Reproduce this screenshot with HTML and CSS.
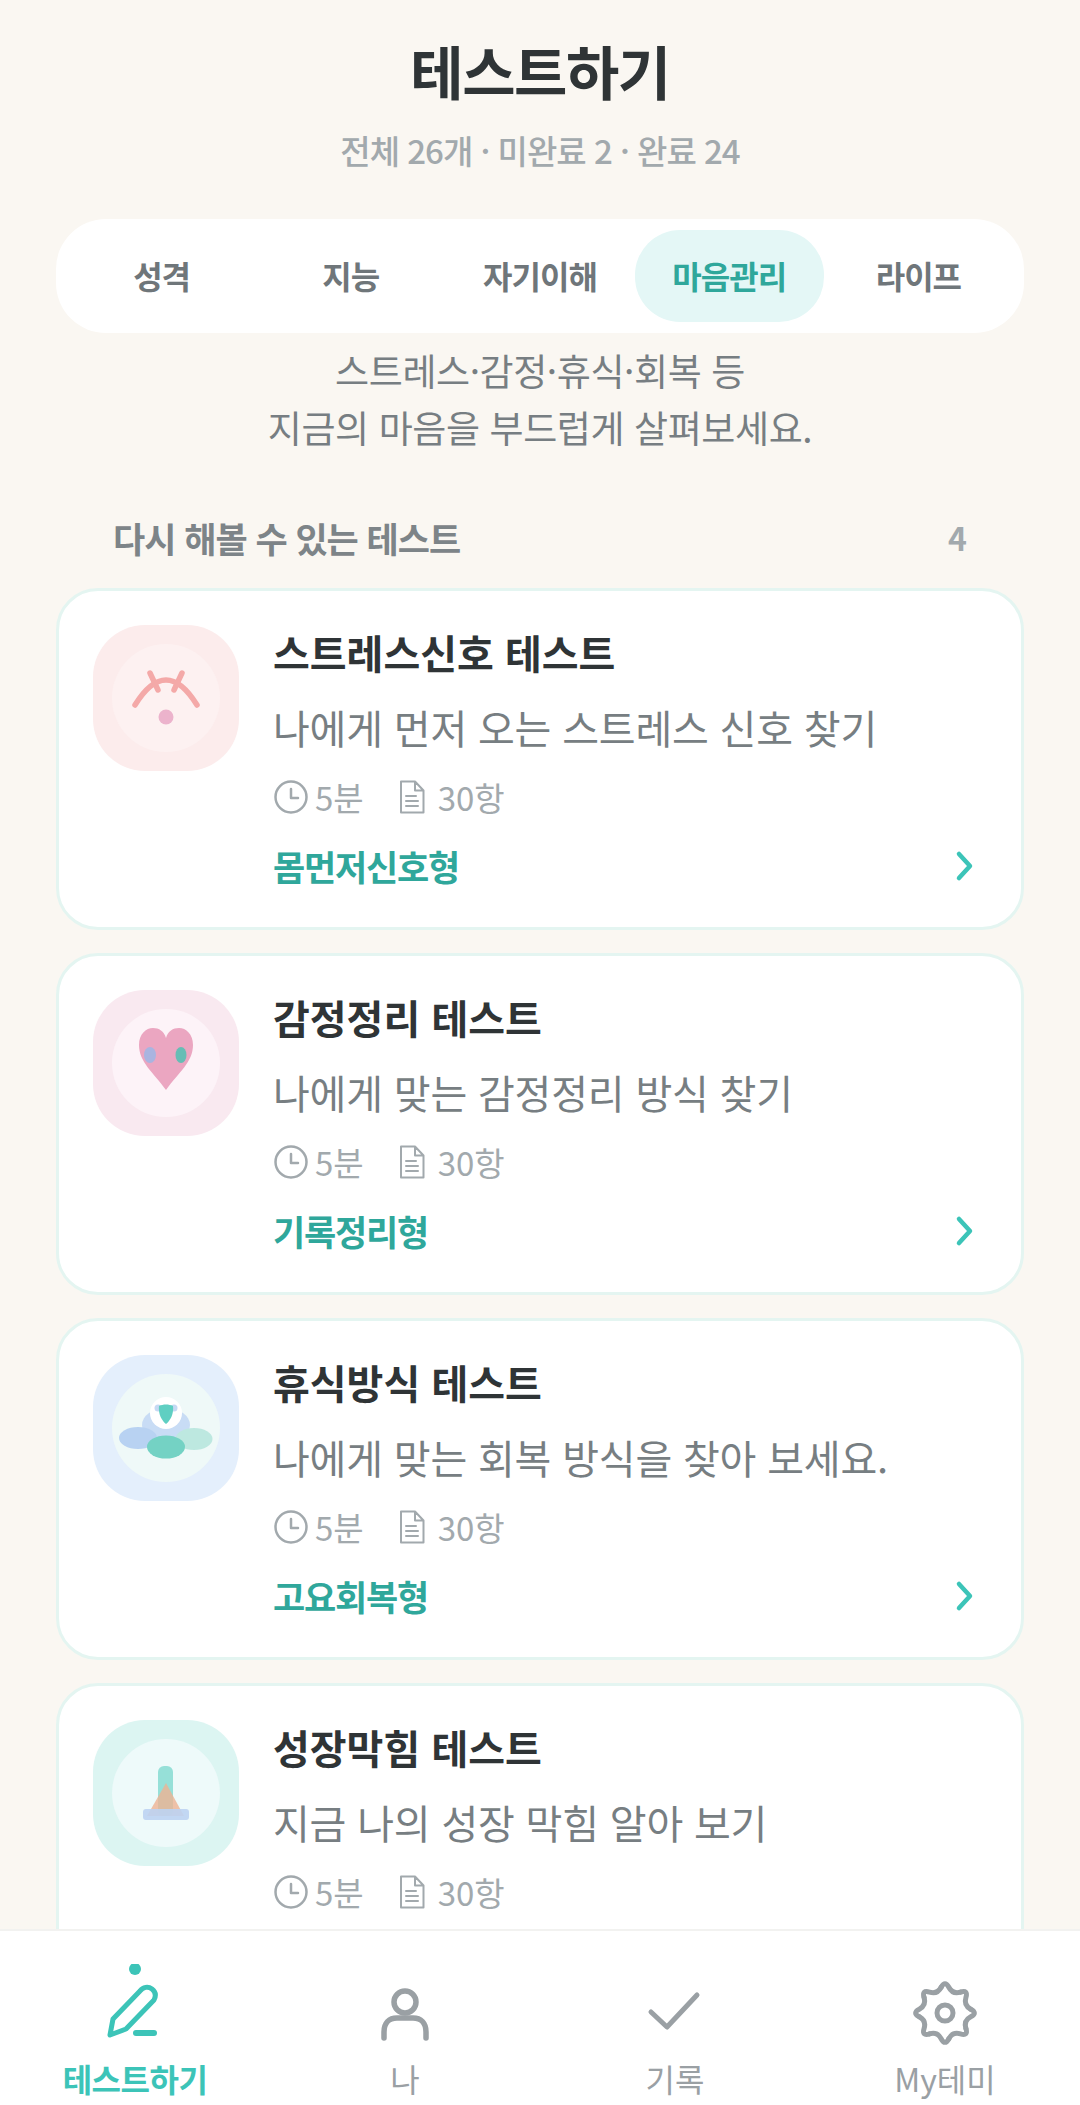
FILE: index.html
```html
<!DOCTYPE html>
<html lang="ko">
<head>
<meta charset="UTF-8">
<title>테스트하기</title>
<link rel="stylesheet" href="styles.css">
</head>
<body>
<div class="page">
  <main class="content">
    <h1 class="title">테스트하기</h1>
    <p class="summary">전체 26개 · 미완료 2 · 완료 24</p>

    <div class="tabs">
      <div class="tab">성격</div>
      <div class="tab">지능</div>
      <div class="tab">자기이해</div>
      <div class="tab active">마음관리</div>
      <div class="tab">라이프</div>
    </div>

    <p class="intro">스트레스·감정·휴식·회복 등<br>지금의 마음을 부드럽게 살펴보세요.</p>

    <div class="section-head">
      <span class="section-name">다시 해볼 수 있는 테스트</span>
      <span class="section-count">4</span>
    </div>

    <!-- card 1 -->
    <div class="card">
      <svg class="thumb" viewBox="0 0 146 146">
        <rect width="146" height="146" rx="52" fill="#fcecec"/>
        <circle cx="73" cy="73" r="54" fill="#fdf1f1"/>
        <path d="M42 80Q73 30 104 80" fill="none" stroke="#f4a9a8" stroke-width="5.5" stroke-linecap="round"/>
        <path d="M57 48L65 65M89 48L81 65" fill="none" stroke="#f4a9a8" stroke-width="5.5" stroke-linecap="round"/>
        <circle cx="73" cy="92" r="7.5" fill="#ecb3cc"/>
      </svg>
      <div class="card-body">
        <div class="card-title">스트레스신호 테스트</div>
        <div class="card-desc">나에게 먼저 오는 스트레스 신호 찾기</div>
        <div class="meta">
          <svg class="meta-icon" viewBox="0 0 36 36"><circle cx="18" cy="18" r="15.5"/><path d="M18 10v9h7"/></svg>
          <span class="meta-time">5분</span>
          <svg class="meta-icon doc" viewBox="0 0 26 34"><path d="M2 1.5h14l8.5 9v22H2zM16 1.5v9h8.5M7 16h10M7 21h12M7 26h12"/></svg>
          <span>30항</span>
        </div>
        <div class="card-foot">
          <span class="tag">몸먼저신호형</span>
          <svg class="chevron" viewBox="0 0 20 32"><path d="M4 4l11 12L4 28"/></svg>
        </div>
      </div>
    </div>

    <!-- card 2 -->
    <div class="card">
      <svg class="thumb" viewBox="0 0 146 146">
        <rect width="146" height="146" rx="52" fill="#f9e9f0"/>
        <circle cx="73" cy="73" r="54" fill="#fdf3f8"/>
        <path d="M73 100C60 82 46 72 46 55C46 44 53 38 60 38C66 38 71 41 73 48C75 41 80 38 86 38C93 38 100 44 100 55C100 72 86 82 73 100Z" fill="#eba6c1"/>
        <ellipse cx="57" cy="65" rx="6" ry="8" fill="#a9b4e0"/>
        <ellipse cx="88" cy="65" rx="5.5" ry="8" fill="#66bdb5"/>
      </svg>
      <div class="card-body">
        <div class="card-title">감정정리 테스트</div>
        <div class="card-desc">나에게 맞는 감정정리 방식 찾기</div>
        <div class="meta">
          <svg class="meta-icon" viewBox="0 0 36 36"><circle cx="18" cy="18" r="15.5"/><path d="M18 10v9h7"/></svg>
          <span class="meta-time">5분</span>
          <svg class="meta-icon doc" viewBox="0 0 26 34"><path d="M2 1.5h14l8.5 9v22H2zM16 1.5v9h8.5M7 16h10M7 21h12M7 26h12"/></svg>
          <span>30항</span>
        </div>
        <div class="card-foot">
          <span class="tag">기록정리형</span>
          <svg class="chevron" viewBox="0 0 20 32"><path d="M4 4l11 12L4 28"/></svg>
        </div>
      </div>
    </div>

    <!-- card 3 -->
    <div class="card">
      <svg class="thumb" viewBox="0 0 146 146">
        <rect width="146" height="146" rx="52" fill="#e4effc"/>
        <circle cx="73" cy="73" r="54" fill="#eff9f8"/>
        <ellipse cx="73" cy="70" rx="24" ry="17" fill="#c8dcf5"/>
        <ellipse cx="45" cy="83" rx="19" ry="11" fill="#b8d2f2"/>
        <ellipse cx="101" cy="84" rx="18.5" ry="11" fill="#bde8e0"/>
        <ellipse cx="73" cy="92" rx="19" ry="11.5" fill="#74d2c4"/>
        <circle cx="73" cy="58" r="16" fill="#ffffff"/>
        <circle cx="65" cy="53" r="3.5" fill="#c5d9f3"/>
        <circle cx="81" cy="53" r="3.5" fill="#c5d9f3"/>
        <path d="M66 51C70 49 76 49 80 51C81 59 77 66 73 69C69 66 65 59 66 51Z" fill="#5fcfc2"/>
      </svg>
      <div class="card-body">
        <div class="card-title">휴식방식 테스트</div>
        <div class="card-desc">나에게 맞는 회복 방식을 찾아 보세요.</div>
        <div class="meta">
          <svg class="meta-icon" viewBox="0 0 36 36"><circle cx="18" cy="18" r="15.5"/><path d="M18 10v9h7"/></svg>
          <span class="meta-time">5분</span>
          <svg class="meta-icon doc" viewBox="0 0 26 34"><path d="M2 1.5h14l8.5 9v22H2zM16 1.5v9h8.5M7 16h10M7 21h12M7 26h12"/></svg>
          <span>30항</span>
        </div>
        <div class="card-foot">
          <span class="tag">고요회복형</span>
          <svg class="chevron" viewBox="0 0 20 32"><path d="M4 4l11 12L4 28"/></svg>
        </div>
      </div>
    </div>

    <!-- card 4 -->
    <div class="card">
      <svg class="thumb" viewBox="0 0 146 146">
        <rect width="146" height="146" rx="52" fill="#dcf5f2"/>
        <circle cx="73" cy="73" r="54" fill="#eefafa"/>
        <rect x="65" y="46" width="15" height="50" rx="6" fill="#96e0d8"/>
        <path d="M73 63L91 96H54Z" fill="#eeb394" fill-opacity=".8"/>
        <rect x="50" y="89" width="46" height="11" rx="3" fill="#bcd3f2" fill-opacity=".9"/>
      </svg>
      <div class="card-body">
        <div class="card-title">성장막힘 테스트</div>
        <div class="card-desc">지금 나의 성장 막힘 알아 보기</div>
        <div class="meta">
          <svg class="meta-icon" viewBox="0 0 36 36"><circle cx="18" cy="18" r="15.5"/><path d="M18 10v9h7"/></svg>
          <span class="meta-time">5분</span>
          <svg class="meta-icon doc" viewBox="0 0 26 34"><path d="M2 1.5h14l8.5 9v22H2zM16 1.5v9h8.5M7 16h10M7 21h12M7 26h12"/></svg>
          <span>30항</span>
        </div>
      </div>
    </div>
  </main>

  <nav class="bottom-nav">
    <div class="nav-item active">
      <svg class="nav-icon" viewBox="0 0 80 86">
        <circle cx="40" cy="5" r="6" class="fill"/>
        <path d="M15 71l3-16L45 27c3-4 8-5 12-2s4 7 2 11L31 65z"/>
        <path d="M41 69h18" stroke-width="6"/>
      </svg>
      <span class="nav-label">테스트하기</span>
    </div>
    <div class="nav-item">
      <svg class="nav-icon" viewBox="0 0 80 86">
        <circle cx="40" cy="38" r="11" stroke-width="5.5"/>
        <path d="M19 74v-6c0-9 5-14 13-14h16c8 0 13 5 13 14v6" stroke-width="5.5"/>
      </svg>
      <span class="nav-label">나</span>
    </div>
    <div class="nav-item">
      <svg class="nav-icon" viewBox="0 0 80 86">
        <path d="M16 48l16 15 30-32"/>
      </svg>
      <span class="nav-label">기록</span>
    </div>
    <div class="nav-item">
      <svg class="nav-icon" viewBox="0 0 80 86">
        <g transform="translate(40 49)">
          <path id="lobe" d="M-3.83 -25.74Q0 -33 3.83 -25.74Q7.65 -18.48 15.49 -20.9"/>
          <use href="#lobe" transform="rotate(45)"/>
          <use href="#lobe" transform="rotate(90)"/>
          <use href="#lobe" transform="rotate(135)"/>
          <use href="#lobe" transform="rotate(180)"/>
          <use href="#lobe" transform="rotate(225)"/>
          <use href="#lobe" transform="rotate(270)"/>
          <use href="#lobe" transform="rotate(315)"/>
          <circle r="8"/>
        </g>
      </svg>
      <span class="nav-label">My테미</span>
    </div>
  </nav>
</div>
</body>
</html>
```

FILE: styles.css
```css
* {
    box-sizing: border-box;
}

html, body {
    margin: 0;
    padding: 0;
}

body {
    background: #faf7f2;
    font-family: "Noto Sans CJK KR", "Noto Sans", sans-serif;
}

.page {
    width: 1080px;
    height: 2105px;
    display: flex;
    flex-direction: column;
    overflow: hidden;
}

.content {
    flex: 1;
    min-height: 0;
    overflow: hidden;
    padding: 35px 56px 0;
}

.title {
    margin: 0;
    text-align: center;
    font-size: 58px;
    line-height: 70px;
    font-weight: 700;
    letter-spacing: -1.5px;
    color: #2f3436;
}

.summary {
    margin: 23px 0 0;
    text-align: center;
    font-size: 33px;
    line-height: 44px;
    font-weight: 500;
    letter-spacing: -1px;
    color: #a2a9ad;
}

.tabs {
    margin-top: 47px;
    height: 114px;
    padding: 11px;
    display: grid;
    grid-template-columns: repeat(5, 1fr);
    background: #ffffff;
    border-radius: 50px;
}

.tab {
    display: flex;
    align-items: center;
    justify-content: center;
    padding-bottom: 3px;
    font-size: 32px;
    font-weight: 700;
    letter-spacing: -1px;
    color: #6f767a;
    border-radius: 45px;
}

.tab.active {
    background: #e4f7f6;
    color: #2fa79b;
}

.intro {
    margin: 9px 0 0;
    text-align: center;
    font-size: 37px;
    line-height: 57px;
    letter-spacing: -0.4px;
    color: #777e82;
}

.section-head {
    margin: 56px 0 26px;
    padding: 0 57px;
    height: 50px;
    display: flex;
    align-items: center;
    justify-content: space-between;
    color: #7d8488;
    font-weight: 700;
}

.section-name {
    font-size: 35px;
    letter-spacing: -1px;
}

.section-count {
    font-size: 32px;
    color: #a2a9ad;
}

.card {
    height: 342px;
    margin-bottom: 23px;
    padding: 34px;
    display: flex;
    gap: 34px;
    background: #ffffff;
    border: 3px solid #e4f5f1;
    border-radius: 42px;
}

.thumb {
    width: 146px;
    height: 146px;
    flex: none;
}

.card-body {
    flex: 1;
    min-width: 0;
}

.card-title {
    margin-top: 2px;
    font-size: 40px;
    line-height: 50px;
    font-weight: 700;
    color: #2f3436;
}

.card-desc {
    margin-top: 25px;
    font-size: 40px;
    line-height: 50px;
    letter-spacing: -0.2px;
    color: #777e82;
}

.meta {
    margin-top: 23px;
    height: 44px;
    display: flex;
    align-items: center;
    font-size: 33px;
    color: #a2a9ad;
}

.meta-icon {
    width: 36px;
    height: 36px;
    flex: none;
    fill: none;
    stroke: #a2a9ad;
    stroke-width: 2.5;
    stroke-linecap: round;
    stroke-linejoin: round;
}

.meta-time {
    margin: 0 35px 0 6px;
}

.meta-icon.doc {
    width: 26px;
    margin-right: 13px;
    stroke-width: 2;
}

.card-foot {
    margin-top: 23px;
    height: 46px;
    display: flex;
    align-items: center;
    justify-content: space-between;
    padding-right: 12px;
}

.tag {
    font-size: 35px;
    font-weight: 700;
    letter-spacing: -1.2px;
    color: #2fa79b;
}

.chevron {
    width: 20px;
    height: 32px;
    margin-top: 2px;
    fill: none;
    stroke: #3cc4b8;
    stroke-width: 4.5;
    stroke-linecap: round;
    stroke-linejoin: round;
}

.bottom-nav {
    height: 176px;
    flex: none;
    display: grid;
    grid-template-columns: repeat(4, 1fr);
    background: #ffffff;
    border-top: 2px solid #f2f2f0;
}

.nav-item {
    display: flex;
    flex-direction: column;
    align-items: center;
    padding-top: 33px;
    color: #9aa0a4;
}

.nav-icon {
    width: 80px;
    height: 86px;
    flex: none;
    fill: none;
    stroke: #9aa0a4;
    stroke-width: 5;
    stroke-linecap: round;
    stroke-linejoin: round;
}

.nav-item.active .nav-icon {
    stroke: #3cc4b8;
}

.nav-icon .fill {
    fill: #3cc4b8;
    stroke: none;
}

.nav-label {
    margin-top: 8px;
    font-size: 32px;
    line-height: 40px;
}

.nav-item.active .nav-label {
    color: #3cc4b8;
    font-weight: 700;
    letter-spacing: -0.5px;
}
```
